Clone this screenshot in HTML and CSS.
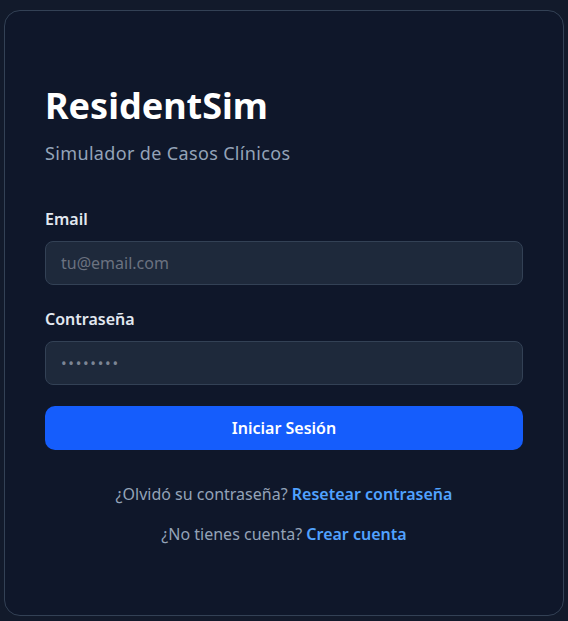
FILE: index.html
```html
<!DOCTYPE html>
<html lang="es">
<head>
<meta charset="utf-8">
<title>ResidentSim</title>
<link rel="stylesheet" href="styles.css">
</head>
<body>
<main class="card">
  <h1 class="title">ResidentSim</h1>
  <p class="subtitle">Simulador de Casos Clínicos</p>
  <form class="form">
    <div class="field">
      <label class="label" for="email">Email</label>
      <input class="input" id="email" type="email" placeholder="tu@email.com">
    </div>
    <div class="field">
      <label class="label" for="pw">Contraseña</label>
      <input class="input input-pw" id="pw" type="password" value="password">
    </div>
    <button class="button" type="button">Iniciar Sesión</button>
  </form>
  <div class="links">
    <p class="link-line">¿Olvidó su contraseña? <a class="link" href="#">Resetear contraseña</a></p>
    <p class="link-line">¿No tienes cuenta? <a class="link" href="#">Crear cuenta</a></p>
  </div>
</main>
</body>
</html>
```
FILE: styles.css
```css
* { box-sizing: border-box; }
html, body { height: 100%; }
body {
  margin: 0;
  padding: 10px 4px 5px 4px;
  background: #121a2b;
  font-family: "Noto Sans", "Open Sans", sans-serif;
}
.card {
  height: 606px;
  background: #0f172a;
  border: 1px solid #334155;
  border-radius: 16px;
  padding: 75px 40px 40px 40px;
}
.title {
  margin: 0;
  font-size: 36px;
  line-height: 40px;
  font-weight: 700;
  color: #ffffff;
}
.subtitle {
  margin: 13px 0 0 0;
  font-size: 18px;
  line-height: 28px;
  letter-spacing: 0.35px;
  color: #94a3b8;
}
.form {
  margin-top: 40px;
  display: flex;
  flex-direction: column;
}
.field {
  display: flex;
  flex-direction: column;
  gap: 10px;
  margin-bottom: 22px;
}
.field + .field { margin-bottom: 21px; }
.label {
  font-size: 16px;
  line-height: 24px;
  font-weight: 600;
  color: #e2e8f0;
}
.input {
  height: 44px;
  width: 100%;
  background: #1e293b;
  border: 1px solid #334155;
  border-radius: 8px;
  padding: 0 15px;
  font-family: inherit;
  font-size: 16px;
  color: #6b7280;
  outline: none;
}
.input::placeholder { color: #6b7280; }
.input-pw { font-size: 15px; letter-spacing: 1.7px; color: #7c8594; }
.button {
  height: 44px;
  width: 100%;
  border: none;
  border-radius: 10px;
  background: #155dfc;
  color: #ffffff;
  font-family: inherit;
  font-size: 16px;
  font-weight: 600;
}
.links {
  margin-top: 32px;
  display: flex;
  flex-direction: column;
  gap: 16px;
  align-items: center;
}
.link-line {
  margin: 0;
  font-size: 16px;
  line-height: 24px;
  color: #94a3b8;
}
.link {
  color: #51a2ff;
  font-weight: 600;
  text-decoration: none;
}
```
